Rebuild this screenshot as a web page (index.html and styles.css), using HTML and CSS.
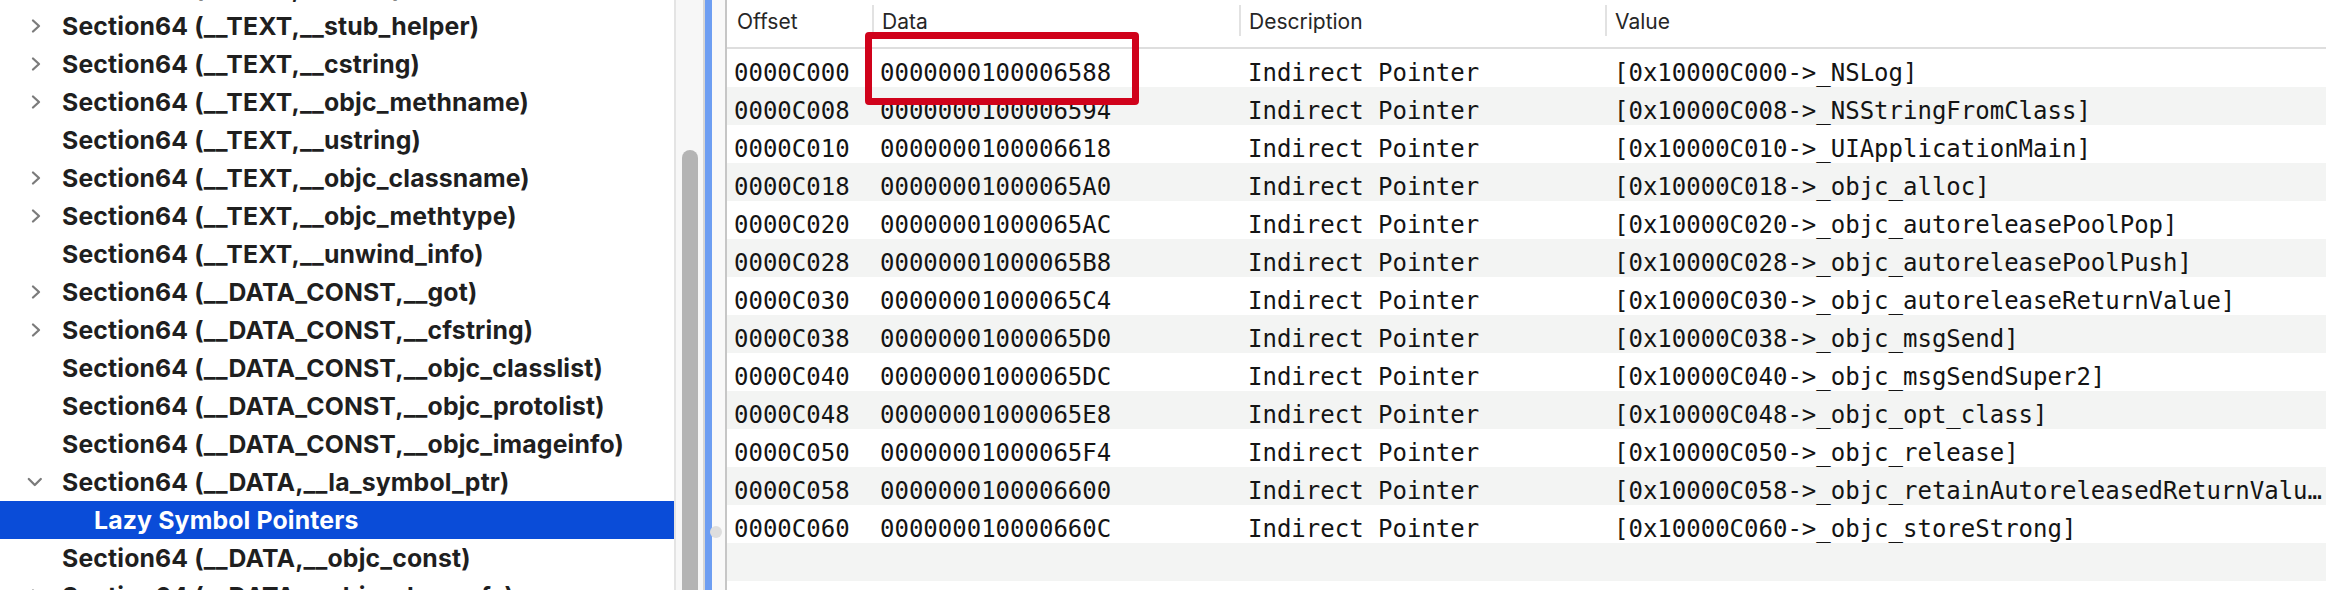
FILE: index.html
```html
<!DOCTYPE html>
<html>
<head>
<meta charset="utf-8">
<link rel="stylesheet" href="styles.css">
</head>
<body>
<div class="app">
  <div class="sidebar">
    <div class="sb-list">
      <div class="sb-row"><span class="disc"><svg viewBox="0 0 16 16"><path class="chev" d="M5 2.5 L11 8 L5 13.5"/></svg></span><span class="label">Section64 (__TEXT,__stubs)</span></div>
      <div class="sb-row"><span class="disc"><svg viewBox="0 0 16 16"><path class="chev" d="M5 2.5 L11 8 L5 13.5"/></svg></span><span class="label">Section64 (__TEXT,__stub_helper)</span></div>
      <div class="sb-row"><span class="disc"><svg viewBox="0 0 16 16"><path class="chev" d="M5 2.5 L11 8 L5 13.5"/></svg></span><span class="label">Section64 (__TEXT,__cstring)</span></div>
      <div class="sb-row"><span class="disc"><svg viewBox="0 0 16 16"><path class="chev" d="M5 2.5 L11 8 L5 13.5"/></svg></span><span class="label">Section64 (__TEXT,__objc_methname)</span></div>
      <div class="sb-row"><span class="disc"></span><span class="label">Section64 (__TEXT,__ustring)</span></div>
      <div class="sb-row"><span class="disc"><svg viewBox="0 0 16 16"><path class="chev" d="M5 2.5 L11 8 L5 13.5"/></svg></span><span class="label">Section64 (__TEXT,__objc_classname)</span></div>
      <div class="sb-row"><span class="disc"><svg viewBox="0 0 16 16"><path class="chev" d="M5 2.5 L11 8 L5 13.5"/></svg></span><span class="label">Section64 (__TEXT,__objc_methtype)</span></div>
      <div class="sb-row"><span class="disc"></span><span class="label">Section64 (__TEXT,__unwind_info)</span></div>
      <div class="sb-row"><span class="disc"><svg viewBox="0 0 16 16"><path class="chev" d="M5 2.5 L11 8 L5 13.5"/></svg></span><span class="label">Section64 (__DATA_CONST,__got)</span></div>
      <div class="sb-row"><span class="disc"><svg viewBox="0 0 16 16"><path class="chev" d="M5 2.5 L11 8 L5 13.5"/></svg></span><span class="label">Section64 (__DATA_CONST,__cfstring)</span></div>
      <div class="sb-row"><span class="disc"></span><span class="label">Section64 (__DATA_CONST,__objc_classlist)</span></div>
      <div class="sb-row"><span class="disc"></span><span class="label">Section64 (__DATA_CONST,__objc_protolist)</span></div>
      <div class="sb-row"><span class="disc"></span><span class="label">Section64 (__DATA_CONST,__objc_imageinfo)</span></div>
      <div class="sb-row"><span class="disc"><svg viewBox="0 0 16 16"><path class="chev" d="M0.8 5 L6.8 11 L12.8 5"/></svg></span><span class="label">Section64 (__DATA,__la_symbol_ptr)</span></div>
      <div class="sb-row child selected"><span class="label">Lazy Symbol Pointers</span></div>
      <div class="sb-row"><span class="disc"></span><span class="label">Section64 (__DATA,__objc_const)</span></div>
      <div class="sb-row"><span class="disc"><svg viewBox="0 0 16 16"><path class="chev" d="M5 2.5 L11 8 L5 13.5"/></svg></span><span class="label">Section64 (__DATA,__objc_classrefs)</span></div>
    </div>
  </div>
  <div class="sb-edge"></div>
  <div class="sb-track"><div class="sb-thumb"></div></div>
  <div class="split-line"></div>
  <div class="split-focus"></div>
  <div class="split-track"><div class="split-knob"></div></div>
  <div class="split-line dark"></div>
  <div class="table">
    <div class="thead">
      <div class="th first"><span class="th-label">Offset</span></div>
      <div class="th"><span class="hsep"></span><span class="th-label">Data</span></div>
      <div class="th"><span class="hsep"></span><span class="th-label">Description</span></div>
      <div class="th"><span class="hsep"></span><span class="th-label">Value</span></div>
    </div>
    <div class="tbody">
      <div class="tr"><div class="td c1">0000C000</div><div class="td c2">0000000100006588</div><div class="td c3">Indirect Pointer</div><div class="td c4">[0x10000C000-&gt;_NSLog]</div></div>
      <div class="tr alt"><div class="td c1">0000C008</div><div class="td c2">0000000100006594</div><div class="td c3">Indirect Pointer</div><div class="td c4">[0x10000C008-&gt;_NSStringFromClass]</div></div>
      <div class="tr"><div class="td c1">0000C010</div><div class="td c2">0000000100006618</div><div class="td c3">Indirect Pointer</div><div class="td c4">[0x10000C010-&gt;_UIApplicationMain]</div></div>
      <div class="tr alt"><div class="td c1">0000C018</div><div class="td c2">00000001000065A0</div><div class="td c3">Indirect Pointer</div><div class="td c4">[0x10000C018-&gt;_objc_alloc]</div></div>
      <div class="tr"><div class="td c1">0000C020</div><div class="td c2">00000001000065AC</div><div class="td c3">Indirect Pointer</div><div class="td c4">[0x10000C020-&gt;_objc_autoreleasePoolPop]</div></div>
      <div class="tr alt"><div class="td c1">0000C028</div><div class="td c2">00000001000065B8</div><div class="td c3">Indirect Pointer</div><div class="td c4">[0x10000C028-&gt;_objc_autoreleasePoolPush]</div></div>
      <div class="tr"><div class="td c1">0000C030</div><div class="td c2">00000001000065C4</div><div class="td c3">Indirect Pointer</div><div class="td c4">[0x10000C030-&gt;_objc_autoreleaseReturnValue]</div></div>
      <div class="tr alt"><div class="td c1">0000C038</div><div class="td c2">00000001000065D0</div><div class="td c3">Indirect Pointer</div><div class="td c4">[0x10000C038-&gt;_objc_msgSend]</div></div>
      <div class="tr"><div class="td c1">0000C040</div><div class="td c2">00000001000065DC</div><div class="td c3">Indirect Pointer</div><div class="td c4">[0x10000C040-&gt;_objc_msgSendSuper2]</div></div>
      <div class="tr alt"><div class="td c1">0000C048</div><div class="td c2">00000001000065E8</div><div class="td c3">Indirect Pointer</div><div class="td c4">[0x10000C048-&gt;_objc_opt_class]</div></div>
      <div class="tr"><div class="td c1">0000C050</div><div class="td c2">00000001000065F4</div><div class="td c3">Indirect Pointer</div><div class="td c4">[0x10000C050-&gt;_objc_release]</div></div>
      <div class="tr alt"><div class="td c1">0000C058</div><div class="td c2">0000000100006600</div><div class="td c3">Indirect Pointer</div><div class="td c4">[0x10000C058-&gt;_objc_retainAutoreleasedReturnValue]</div></div>
      <div class="tr"><div class="td c1">0000C060</div><div class="td c2">000000010000660C</div><div class="td c3">Indirect Pointer</div><div class="td c4">[0x10000C060-&gt;_objc_storeStrong]</div></div>
      <div class="tr alt"><div class="td c1"></div><div class="td c2"></div><div class="td c3"></div><div class="td c4"></div></div>
    </div>
  </div>
</div>
<div class="highlight-box"></div>
</body>
</html>
```
FILE: styles.css
```css
html, body {
  margin: 0;
  padding: 0;
  width: 2326px;
  height: 590px;
  overflow: hidden;
  background: #ffffff;
}

.app {
  display: flex;
  width: 2326px;
  height: 590px;
  overflow: hidden;
}

/* ---------- Sidebar outline ---------- */
.sidebar {
  width: 674px;
  flex: 0 0 674px;
  height: 590px;
  overflow: hidden;
  background: #ffffff;
}

.sb-list {
  margin-top: -31px;
  display: flex;
  flex-direction: column;
}

.sb-row {
  height: 38px;
  display: flex;
  align-items: center;
  padding-left: 28px;
  font-family: Inter, "Liberation Sans", sans-serif;
  font-weight: 700;
  font-size: 24.8px;
  letter-spacing: 0.15px;
  line-height: 38px;
  color: #1f1f1f;
  white-space: nowrap;
}

.sb-row.child {
  padding-left: 94px;
}

.sb-row.selected {
  background: #0a4cd8;
  color: #ffffff;
}

.disc {
  width: 16px;
  height: 16px;
  flex: 0 0 16px;
  display: flex;
}

.disc svg {
  width: 16px;
  height: 16px;
  overflow: visible;
}

.chev {
  fill: none;
  stroke: #7b7b7b;
  stroke-width: 2.3;
  stroke-linecap: round;
  stroke-linejoin: round;
}

.label {
  margin-left: 18px;
}

.sb-row.child .label {
  margin-left: 0;
}

/* ---------- Scroll bars and split ---------- */
.sb-edge {
  width: 2px;
  flex: 0 0 2px;
  background: #e4e4e4;
}

.sb-track {
  width: 27px;
  flex: 0 0 27px;
  background: #f7f7f7;
  padding-top: 150px;
  box-sizing: border-box;
  display: flex;
  flex-direction: column;
  align-items: flex-start;
}

.sb-thumb {
  margin-left: 6px;
  width: 16px;
  flex: 1;
  margin-bottom: -20px;
  border-radius: 8px;
  background: #b4b4b4;
}

.split-line {
  width: 2px;
  flex: 0 0 2px;
  background: #d6d6d6;
}

.split-line.dark {
  background: #c6c6c6;
}

.split-focus {
  width: 7px;
  flex: 0 0 7px;
  background: #6e9ef2;
}

.split-track {
  width: 13px;
  flex: 0 0 13px;
  background: #f9f9f9;
  padding-top: 526px;
  box-sizing: border-box;
}

.split-knob {
  width: 12px;
  height: 12px;
  margin-left: -2px;
  border-radius: 50%;
  background: #dedede;
}

/* ---------- Table ---------- */
.table {
  flex: 1;
  min-width: 0;
  display: flex;
  flex-direction: column;
}

.thead {
  display: grid;
  grid-template-columns: 145px 367px 366px minmax(0, 1fr);
  height: 47px;
  border-bottom: 2px solid #dedede;
}

.th {
  display: flex;
  align-items: flex-start;
  font-family: Inter, "Liberation Sans", sans-serif;
  font-size: 21px;
  line-height: 43px;
  color: #262626;
  white-space: nowrap;
}

.th.first {
  padding-left: 10px;
}

.hsep {
  width: 2px;
  height: 31px;
  margin-top: 5px;
  background: #e2e2e2;
  flex: 0 0 2px;
}

.th-label {
  margin-left: 8px;
}

.th.first .th-label {
  margin-left: 0;
}

.tbody {
  display: flex;
  flex-direction: column;
}

.tr {
  display: grid;
  grid-template-columns: 145px 367px 366px minmax(0, 1fr);
  height: 38px;
  box-sizing: border-box;
  padding-top: 10px;
  font-family: "DejaVu Sans Mono", "Liberation Mono", monospace;
  font-size: 24px;
  line-height: 28px;
  color: #141414;
  white-space: nowrap;
}

.tr.alt {
  background: #f3f4f3;
}

.td {
  overflow: hidden;
  text-overflow: ellipsis;
}

.c1 { padding-left: 7px; }
.c2 { padding-left: 8px; }
.c3 { padding-left: 9px; }
.c4 { padding-left: 9px; padding-right: 0; }

/* ---------- Annotation overlay ---------- */
.highlight-box {
  position: absolute;
  left: 865px;
  top: 32px;
  width: 274px;
  height: 73px;
  box-sizing: border-box;
  border: 7px solid #d0021b;
  border-radius: 4px;
}
```
